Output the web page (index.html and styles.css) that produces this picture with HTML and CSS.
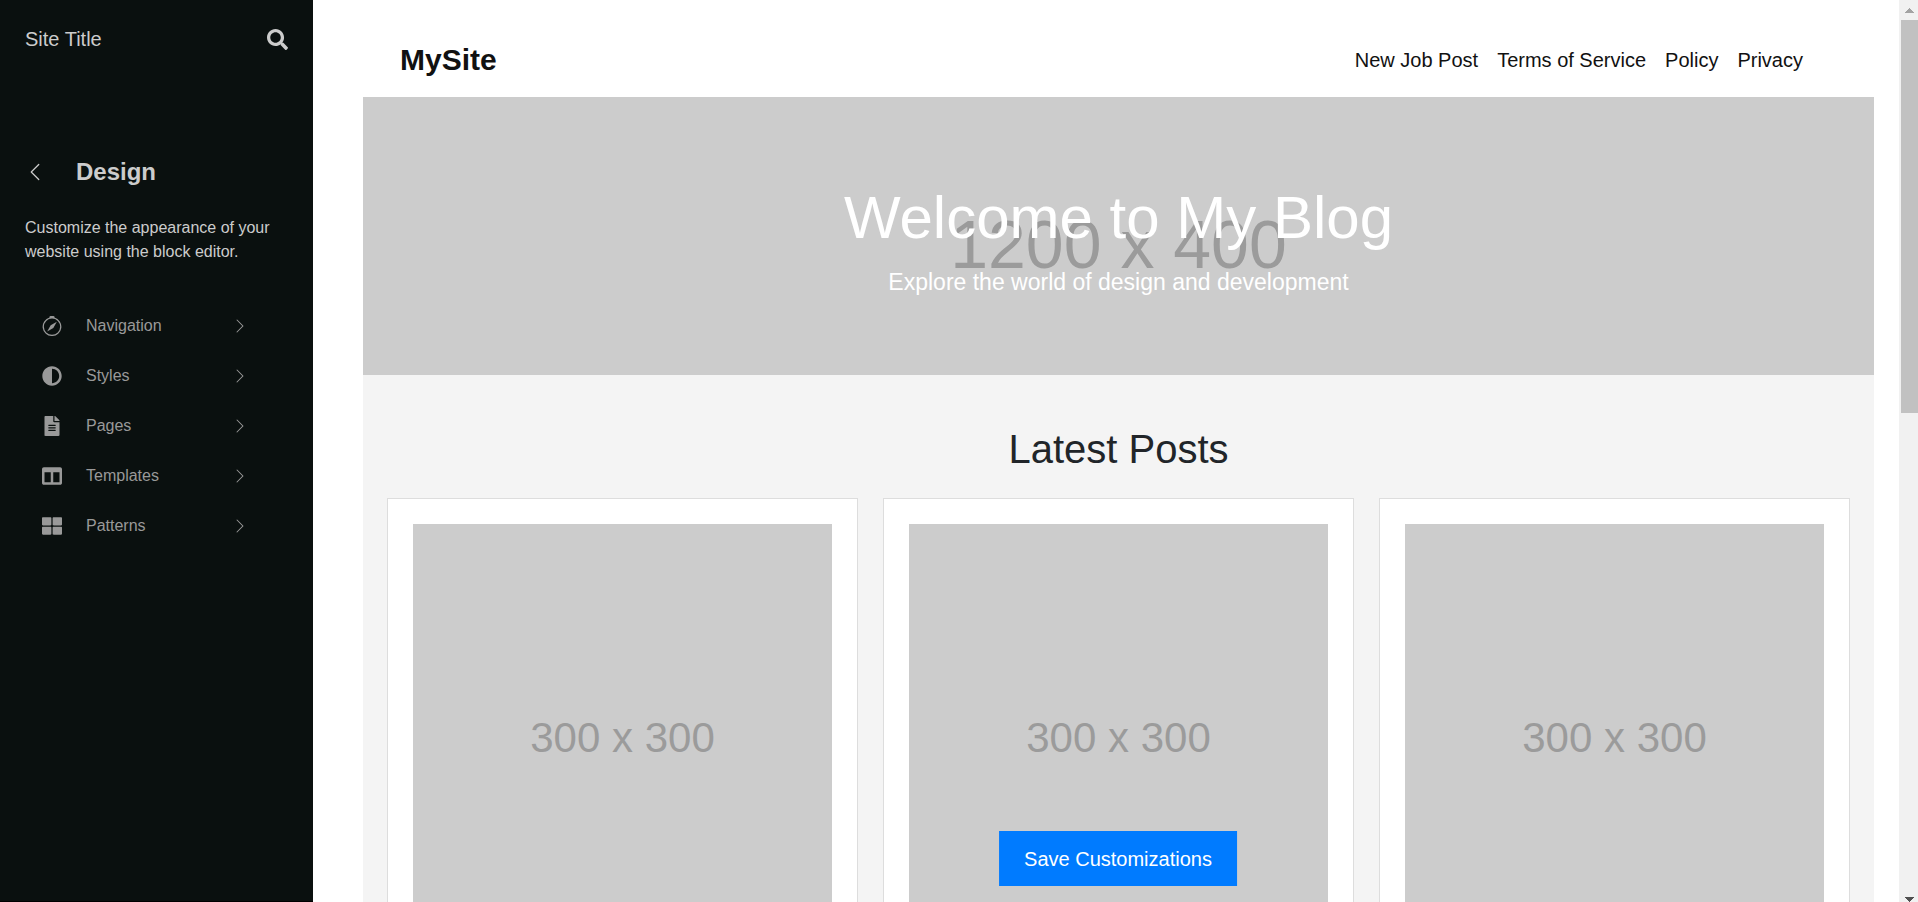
FILE: index.html
```html
<!DOCTYPE html>
<html lang="en">
<head>
<meta charset="utf-8">
<title>Site Editor</title>
<link rel="stylesheet" href="styles.css">
</head>
<body>
<div class="editor">
  <aside class="sidebar">
    <div class="sidebar-top">
      <span class="site-title">Site Title</span>
      <button class="icon-button" type="button" aria-label="Search">
        <svg width="21" height="21" viewBox="0 0 512 512" fill="currentColor"><path d="M505 442.700 405.300 343c-4.500-4.500-10.600-7-17-7H372c27.600-35.300 44-79.700 44-128C416 93.100 322.900 0 208 0S0 93.100 0 208s93.100 208 208 208c48.300 0 92.700-16.400 128-44v16.300c0 6.400 2.500 12.500 7 17l99.700 99.700c9.400 9.400 24.600 9.400 33.900 0l28.300-28.300c9.400-9.400 9.400-24.600.1-34zM208 336c-70.700 0-128-57.200-128-128 0-70.700 57.200-128 128-128 70.700 0 128 57.200 128 128 0 70.700-57.200 128-128 128z"/></svg>
      </button>
    </div>
    <div class="panel-head">
      <button class="icon-button" type="button" aria-label="Back">
        <svg width="20" height="20" viewBox="0 0 16 16" fill="currentColor"><path fill-rule="evenodd" d="M11.354 1.646a.5.5 0 0 1 0 .708L5.707 8l5.647 5.646a.5.5 0 0 1-.708.708l-6-6a.5.5 0 0 1 0-.708l6-6a.5.5 0 0 1 .708 0z"/></svg>
      </button>
      <h1 class="panel-title">Design</h1>
    </div>
    <p class="panel-text">Customize the appearance of your website using the block editor.</p>
    <nav class="menu" aria-label="Design">
      <a class="menu-item" href="#navigation">
        <svg width="20" height="20" viewBox="0 0 16 16" fill="currentColor"><path d="M8 16.016a7.500 7.500 0 0 0 1.962-14.740A1 1 0 0 0 9 0H7a1 1 0 0 0-.962 1.276A7.500 7.500 0 0 0 8 16.016m6.500-7.500a6.500 6.500 0 1 1-13 0 6.500 6.500 0 0 1 13 0"/><path d="m6.940 7.440 4.950-2.830-2.830 4.950-4.949 2.830z"/></svg>
        <span class="menu-label">Navigation</span>
        <svg class="menu-arrow" width="16" height="16" viewBox="0 0 16 16" fill="currentColor"><path fill-rule="evenodd" d="M4.646 1.646a.5.5 0 0 1 .708 0l6 6a.5.5 0 0 1 0 .708l-6 6a.5.5 0 0 1-.708-.708L10.293 8 4.646 2.354a.5.5 0 0 1 0-.708z"/></svg>
      </a>
      <a class="menu-item" href="#styles">
        <svg width="20" height="20" viewBox="0 0 512 512" fill="currentColor"><path d="M8 256c0 136.966 111.033 248 248 248s248-111.034 248-248S392.966 8 256 8 8 119.033 8 256zm248 184V72c101.705 0 184 82.311 184 184 0 101.705-82.311 184-184 184z"/></svg>
        <span class="menu-label">Styles</span>
        <svg class="menu-arrow" width="16" height="16" viewBox="0 0 16 16" fill="currentColor"><path fill-rule="evenodd" d="M4.646 1.646a.5.5 0 0 1 .708 0l6 6a.5.5 0 0 1 0 .708l-6 6a.5.5 0 0 1-.708-.708L10.293 8 4.646 2.354a.5.5 0 0 1 0-.708z"/></svg>
      </a>
      <a class="menu-item" href="#pages">
        <svg width="20" height="20" viewBox="-64 0 512 512" fill="currentColor"><path d="M224 136V0H24C10.700 0 0 10.700 0 24v464c0 13.300 10.700 24 24 24h336c13.300 0 24-10.700 24-24V160H248c-13.200 0-24-10.800-24-24zm64 236c0 6.600-5.400 12-12 12H108c-6.600 0-12-5.400-12-12v-8c0-6.600 5.400-12 12-12h168c6.600 0 12 5.400 12 12v8zm0-64c0 6.600-5.400 12-12 12H108c-6.600 0-12-5.400-12-12v-8c0-6.600 5.400-12 12-12h168c6.600 0 12 5.400 12 12v8zm0-72v8c0 6.600-5.400 12-12 12H108c-6.600 0-12-5.400-12-12v-8c0-6.600 5.400-12 12-12h168c6.600 0 12 5.400 12 12zm96-114.100v6.100H256V0h6.100c6.400 0 12.500 2.500 17 7l97.900 98c4.500 4.500 7 10.600 7 16.900z"/></svg>
        <span class="menu-label">Pages</span>
        <svg class="menu-arrow" width="16" height="16" viewBox="0 0 16 16" fill="currentColor"><path fill-rule="evenodd" d="M4.646 1.646a.5.5 0 0 1 .708 0l6 6a.5.5 0 0 1 0 .708l-6 6a.5.5 0 0 1-.708-.708L10.293 8 4.646 2.354a.5.5 0 0 1 0-.708z"/></svg>
      </a>
      <a class="menu-item" href="#templates">
        <svg width="20" height="20" viewBox="0 0 512 512" fill="currentColor"><path d="M464 32H48C21.490 32 0 53.490 0 80v352c0 26.510 21.490 48 48 48h416c26.510 0 48-21.490 48-48V80c0-26.510-21.490-48-48-48zM224 416H64V160h160v256zm224 0H288V160h160v256z"/></svg>
        <span class="menu-label">Templates</span>
        <svg class="menu-arrow" width="16" height="16" viewBox="0 0 16 16" fill="currentColor"><path fill-rule="evenodd" d="M4.646 1.646a.5.5 0 0 1 .708 0l6 6a.5.5 0 0 1 0 .708l-6 6a.5.5 0 0 1-.708-.708L10.293 8 4.646 2.354a.5.5 0 0 1 0-.708z"/></svg>
      </a>
      <a class="menu-item" href="#patterns">
        <svg width="20" height="20" viewBox="0 0 512 512" fill="currentColor"><path d="M296 32h192c13.255 0 24 10.745 24 24v160c0 13.255-10.745 24-24 24H296c-13.255 0-24-10.745-24-24V56c0-13.255 10.745-24 24-24zm-80 0H24C10.745 32 0 42.745 0 56v160c0 13.255 10.745 24 24 24h192c13.255 0 24-10.745 24-24V56c0-13.255-10.745-24-24-24zM0 296v160c0 13.255 10.745 24 24 24h192c13.255 0 24-10.745 24-24V296c0-13.255-10.745-24-24-24H24c-13.255 0-24 10.745-24 24zm296 184h192c13.255 0 24-10.745 24-24V296c0-13.255-10.745-24-24-24H296c-13.255 0-24 10.745-24 24v160c0 13.255 10.745 24 24 24z"/></svg>
        <span class="menu-label">Patterns</span>
        <svg class="menu-arrow" width="16" height="16" viewBox="0 0 16 16" fill="currentColor"><path fill-rule="evenodd" d="M4.646 1.646a.5.5 0 0 1 .708 0l6 6a.5.5 0 0 1 0 .708l-6 6a.5.5 0 0 1-.708-.708L10.293 8 4.646 2.354a.5.5 0 0 1 0-.708z"/></svg>
      </a>
    </nav>
  </aside>

  <main class="preview">
    <header class="site-header">
      <div class="logo">MySite</div>
      <nav class="site-nav" aria-label="Site">
        <a href="#job">New Job Post</a>
        <a href="#terms">Terms of Service</a>
        <a href="#policy">Policy</a>
        <a href="#privacy">Privacy</a>
      </nav>
    </header>
    <section class="hero">
      <div class="hero-placeholder">1200 x 400</div>
      <h2 class="hero-title">Welcome to My Blog</h2>
      <p class="hero-text">Explore the world of design and development</p>
    </section>
    <section class="posts">
      <h2 class="posts-title">Latest Posts</h2>
      <div class="post-grid">
        <article class="post"><div class="post-image">300 x 300</div></article>
        <article class="post"><div class="post-image">300 x 300</div></article>
        <article class="post"><div class="post-image">300 x 300</div></article>
      </div>
    </section>
    <button class="save" type="button">Save Customizations</button>
  </main>

  <div class="scrollbar" aria-hidden="true">
    <svg class="scroll-up" width="9" height="5" viewBox="0 0 9 5"><path d="M4 0h1v1h1v1h1v1h1v1h1v1H0V4h1V3h1V2h1V1h1z"/></svg>
    <div class="scroll-thumb"></div>
    <svg class="scroll-down" width="9" height="5" viewBox="0 0 9 5"><path d="M0 0h9v1H8v1H7v1H6v1H5v1H4V4H3V3H2V2H1V1H0z"/></svg>
  </div>
</div>
</body>
</html>
```
FILE: styles.css
```css
* {
  box-sizing: border-box;
}

body {
  margin: 0;
  font-family: "Liberation Sans", Arial, sans-serif;
  font-size: 20px;
  line-height: 30px;
  color: #212529;
  background: #fff;
}

h1,
h2,
p {
  margin: 0;
}

a {
  color: inherit;
  text-decoration: none;
}

svg {
  display: block;
  flex: none;
}

.editor {
  display: flex;
  height: 100vh;
  overflow: hidden;
}

/* Sidebar */
.sidebar {
  flex: 0 0 313px;
  padding: 24px 25px;
  border-bottom: 1px solid #000;
  background: #0a100f;
  color: #ccc;
}

.sidebar-top {
  display: flex;
  align-items: center;
  justify-content: space-between;
}

.icon-button {
  padding: 0;
  border: 0;
  background: none;
  color: inherit;
}

.panel-head {
  display: flex;
  align-items: center;
  gap: 31px;
  margin-top: 100px;
}

.panel-title {
  font-size: 24px;
  line-height: 36px;
}

.panel-text {
  margin-top: 26px;
  font-size: 16px;
  line-height: 24px;
}

.menu {
  margin-top: 37px;
  padding: 0 40px 0 17px;
  color: #999;
}

.menu-item {
  display: flex;
  align-items: center;
  gap: 24px;
  height: 50px;
  font-size: 16px;
}

.menu-arrow {
  margin-left: auto;
}

/* Site preview */
.preview {
  position: relative;
  flex: 1;
  min-width: 0;
  padding: 24px 25px 0 50px;
  overflow: hidden;
}

.site-header {
  display: flex;
  align-items: center;
  justify-content: space-between;
  height: 73px;
  padding: 0 71px 2px 37px;
  color: #111;
}

.logo {
  font-size: 30px;
  font-weight: bold;
}

.site-nav {
  display: flex;
  gap: 19px;
}

.hero {
  position: relative;
  padding: 85px 0 75px;
  background: #ccc;
  color: #fff;
  text-align: center;
}

.hero-placeholder {
  position: absolute;
  inset: 16px 0 0;
  display: flex;
  align-items: center;
  justify-content: center;
  font-size: 68px;
  color: #9b9b9b;
}

.hero-title {
  position: relative;
  font-size: 60px;
  font-weight: normal;
  line-height: 72px;
}

.hero-text {
  position: relative;
  margin-top: 10px;
  font-size: 23px;
  line-height: 36px;
}

.posts {
  padding: 50px 24px;
  background: #f4f4f4;
}

.posts-title {
  font-size: 40px;
  font-weight: normal;
  line-height: 48px;
  text-align: center;
}

.post-grid {
  display: grid;
  grid-template-columns: repeat(3, 1fr);
  gap: 25px;
  margin-top: 25px;
}

.post {
  padding: 25px;
  border: 1px solid #ddd;
  background: #fff;
}

.post-image {
  display: flex;
  align-items: center;
  justify-content: center;
  aspect-ratio: 1;
  padding-top: 8px;
  background: #ccc;
  color: #9b9b9b;
  font-size: 42px;
}

.save {
  position: absolute;
  bottom: 16px;
  left: calc(50% + 12px);
  transform: translateX(-50%);
  padding: 13px 25px 12px;
  border: 0;
  background: #007bff;
  color: #fff;
  font: inherit;
}

/* Page scrollbar */
.scrollbar {
  display: flex;
  flex: 0 0 19px;
  flex-direction: column;
  align-items: center;
  padding: 8px 0 0 2px;
  background: #f1f1f1;
}

.scroll-up {
  fill: #a3a3a3;
}

.scroll-thumb {
  width: 100%;
  height: 44%;
  margin: 7px 0 auto;
  background: #c1c1c1;
}

.scroll-down {
  fill: #505050;
}
```
